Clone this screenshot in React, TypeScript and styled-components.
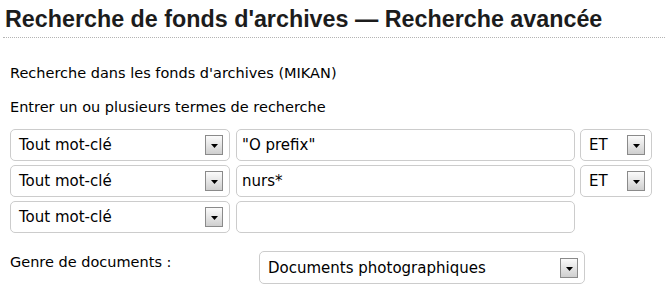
import styled, { createGlobalStyle } from "styled-components";

const GlobalStyle = createGlobalStyle`
  html, body {
    margin: 0;
    padding: 0;
    background: #ffffff;
  }
  body {
    font-family: "DejaVu Sans", Verdana, sans-serif;
    color: #000000;
  }
`;

const Page = styled.div`
  width: 665px;
  height: 290px;
  overflow: hidden;
`;
const Title = styled.h1`
  margin: 0 0 0 3px;
  padding: 4px 0 3px 2px;
  font-family: "Liberation Sans", Arial, sans-serif;
  font-size: 23.3px;
  line-height: 30px;
  font-weight: bold;
  color: #1c1c1c;
  border-bottom: 1px dotted #b4b4b4;
`;
const Content = styled.div`
  padding: 25px 12px 0 10px;
`;
const Intro = styled.div`
  display: flex;
  flex-direction: column;
  gap: 14px;
`;
const Text = styled.p`
  margin: 0;
  font-size: 14.5px;
  line-height: 20px;
`;
const Rows = styled.div`
  display: grid;
  grid-template-columns: 221px 339px 72px;
  column-gap: 5px;
  row-gap: 4px;
  margin-top: 12px;
  & > :nth-child(3n + 1) {
    margin-right: 1px;
  }
`;
const Select = styled.div<{ $height?: number }>`
  box-sizing: border-box;
  height: ${p => (p.$height ? p.$height : 32)}px;
  display: flex;
  align-items: center;
  justify-content: space-between;
  padding: 0 6px 0 8px;
  border: 1px solid #cccccc;
  border-radius: 5px;
  background: #ffffff;
  font-size: 15px;
  white-space: nowrap;
`;
const Arrow = styled.span`
  box-sizing: border-box;
  width: 18px;
  height: 20px;
  display: flex;
  align-items: center;
  justify-content: center;
  border: 1px solid #8a8a8a;
  background: linear-gradient(#fbfbfb, #cfcfcf);
  padding-top: 2px;
`;
const Field = styled.input`
  box-sizing: border-box;
  height: 32px;
  width: 100%;
  margin: 0;
  padding: 0 5px;
  border: 1px solid #cccccc;
  border-radius: 5px;
  background: #ffffff;
  font-family: "DejaVu Sans", Verdana, sans-serif;
  font-size: 15px;
  color: #000000;
  outline: none;
`;
const GenreRow = styled.div`
  display: grid;
  grid-template-columns: 249px 326px;
  margin-top: 18px;
`;
const Label = styled.span`
  font-size: 14.5px;
  line-height: 20px;
  padding-top: 1px;
`;

const DropArrow = () => (
  <Arrow>
    <svg width="7" height="4" viewBox="0 0 7 4">
      <path d="M0 0h7L3.5 4z" fill="#000" />
    </svg>
  </Arrow>
);

const rows = [
  { field: "Tout mot-clé", value: "\"O prefix\"", op: "ET" },
  { field: "Tout mot-clé", value: "nurs*", op: "ET" },
  { field: "Tout mot-clé", value: "", op: null },
];

function App() {
  return (
    <Page>
      <GlobalStyle />
      <Title>Recherche de fonds d'archives — Recherche avancée</Title>
      <Content>
        <Intro>
          <Text>Recherche dans les fonds d'archives (MIKAN)</Text>
          <Text>Entrer un ou plusieurs termes de recherche</Text>
        </Intro>
        <Rows>
          {rows.map((row, i) => [
            <Select key={`f${i}`}>
              {row.field}
              <DropArrow />
            </Select>,
            <Field key={`v${i}`} value={row.value} readOnly />,
            row.op ? (
              <Select key={`o${i}`}>
                {row.op}
                <DropArrow />
              </Select>
            ) : (
              <span key={`o${i}`} />
            ),
          ])}
        </Rows>
        <GenreRow>
          <Label>Genre de documents :</Label>
          <Select $height={33}>
            Documents photographiques
            <DropArrow />
          </Select>
        </GenreRow>
      </Content>
    </Page>
  );
}
export default App;
